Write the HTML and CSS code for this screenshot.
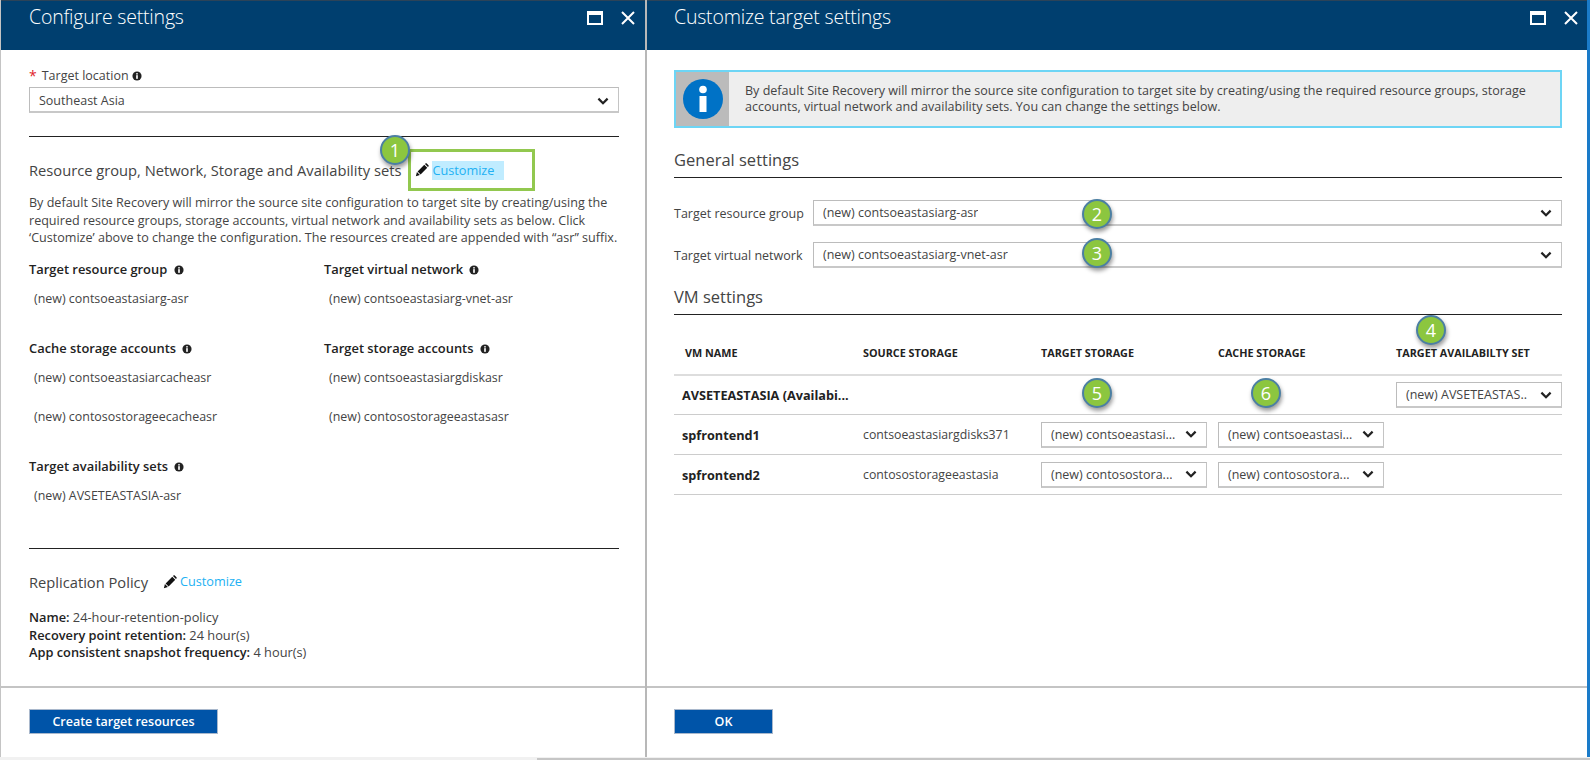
FILE: index.html
```html
<!DOCTYPE html>
<html lang="en">
<head>
<meta charset="utf-8">
<title>Configure settings</title>
<link rel="stylesheet" href="styles.css">
</head>
<body>
<svg class="defs" width="0" height="0" aria-hidden="true">
  <symbol id="i-info" viewBox="0 0 12 12"><circle cx="6" cy="6" r="5.5" fill="#222"/><rect x="5" y="5" width="2" height="4.4" fill="#fff"/><rect x="5" y="2.6" width="2" height="1.6" fill="#fff"/></symbol>
  <symbol id="i-pencil" viewBox="0 0 16 16"><path d="M1 15l1.2-4.6 3.4 3.4z M3 9.6l7.6-7.6 3.4 3.4-7.6 7.6z M11.4 1.2l.6-.6c.5-.4 1-.4 1.4 0l2 2c.4.4.4 1 0 1.4l-.6.6z" fill="#111"/></symbol>
  <symbol id="i-chev" viewBox="0 0 12 8"><path d="M1.4 1.6L6 6.2l4.6-4.6" fill="none" stroke="#222" stroke-width="2.2"/></symbol>
  <symbol id="i-max" viewBox="0 0 16 14"><path d="M0 0h16v14H0z M2 4v8h12V4z" fill="#fff" fill-rule="evenodd"/></symbol>
  <symbol id="i-close" viewBox="0 0 14 14"><path d="M1 1l12 12M13 1L1 13" stroke="#fff" stroke-width="2" fill="none"/></symbol>
</svg>
<div class="screen">
  <div class="panels">
    <section class="panel panel-left">
      <header class="head">
        <h1 class="title">Configure settings</h1>
        <div class="controls">
          <svg class="ic-max"><use href="#i-max"/></svg>
          <svg class="ic-close"><use href="#i-close"/></svg>
        </div>
      </header>
      <div class="body body-left">
        <div class="loc-label"><span class="req">*</span> Target location <svg class="ic-info"><use href="#i-info"/></svg></div>
        <div class="select select-wide"><span class="select-text">Southeast Asia</span><svg class="ic-chev"><use href="#i-chev"/></svg></div>
        <hr class="rule rule-first">
        <div class="sect-line">
          <span class="sect-title">Resource group, Network, Storage and Availability sets</span>
          <svg class="ic-pencil pencil-first"><use href="#i-pencil"/></svg>
          <a class="link link-hl">Customize</a>
        </div>
        <p class="desc">By default Site Recovery will mirror the source site configuration to target site by creating/using the required resource groups, storage accounts, virtual network and availability sets as below. Click ‘Customize’ above to change the configuration. The resources created are appended with “asr” suffix.</p>
        <div class="targets">
          <div class="group">
            <div class="group-head">Target resource group <svg class="ic-info"><use href="#i-info"/></svg></div>
            <div class="group-val">(new) contsoeastasiarg-asr</div>
          </div>
          <div class="group">
            <div class="group-head">Target virtual network <svg class="ic-info"><use href="#i-info"/></svg></div>
            <div class="group-val">(new) contsoeastasiarg-vnet-asr</div>
          </div>
          <div class="group">
            <div class="group-head">Cache storage accounts <svg class="ic-info"><use href="#i-info"/></svg></div>
            <div class="group-val">(new) contsoeastasiarcacheasr</div>
            <div class="group-val group-val-next">(new) contosostorageecacheasr</div>
          </div>
          <div class="group">
            <div class="group-head">Target storage accounts <svg class="ic-info"><use href="#i-info"/></svg></div>
            <div class="group-val">(new) contsoeastasiargdiskasr</div>
            <div class="group-val group-val-next">(new) contosostorageeastasasr</div>
          </div>
          <div class="group">
            <div class="group-head">Target availability sets <svg class="ic-info"><use href="#i-info"/></svg></div>
            <div class="group-val">(new) AVSETEASTASIA-asr</div>
          </div>
        </div>
        <hr class="rule rule-second">
        <div class="sect-line policy-line">
          <span class="sect-title">Replication Policy</span>
          <svg class="ic-pencil pencil-second"><use href="#i-pencil"/></svg>
          <a class="link">Customize</a>
        </div>
        <div class="policy">
          <div><b>Name:</b> 24-hour-retention-policy</div>
          <div><b>Recovery point retention:</b> 24 hour(s)</div>
          <div><b>App consistent snapshot frequency:</b> 4 hour(s)</div>
        </div>
      </div>
      <footer class="foot"><button class="btn btn-create">Create target resources</button></footer>
    </section>
    <section class="panel panel-right">
      <header class="head">
        <h1 class="title">Customize target settings</h1>
        <div class="controls">
          <svg class="ic-max"><use href="#i-max"/></svg>
          <svg class="ic-close"><use href="#i-close"/></svg>
        </div>
      </header>
      <div class="body body-right">
        <div class="notice">
          <div class="notice-icon">
            <svg class="ic-notice" viewBox="0 0 40 40"><circle cx="20" cy="20" r="20" fill="#0072c6"/><rect x="16.5" y="17" width="7" height="16" fill="#fff"/><circle cx="20" cy="10.5" r="3.8" fill="#fff"/></svg>
          </div>
          <p class="notice-text">By default Site Recovery will mirror the source site configuration to target site by creating/using the required resource groups, storage accounts, virtual network and availability sets. You can change the settings below.</p>
        </div>
        <h2 class="sub sub-general">General settings</h2>
        <div class="form-row form-row-first">
          <label class="form-label">Target resource group</label>
          <div class="select select-fill"><span class="select-text">(new) contsoeastasiarg-asr</span><svg class="ic-chev"><use href="#i-chev"/></svg></div>
        </div>
        <div class="form-row form-row-next">
          <label class="form-label">Target virtual network</label>
          <div class="select select-fill"><span class="select-text">(new) contsoeastasiarg-vnet-asr</span><svg class="ic-chev"><use href="#i-chev"/></svg></div>
        </div>
        <h2 class="sub sub-vm">VM settings</h2>
        <div class="vm-table">
          <div class="vm-row vm-head">
            <div class="th th-first">VM NAME</div>
            <div class="th">SOURCE STORAGE</div>
            <div class="th">TARGET STORAGE</div>
            <div class="th">CACHE STORAGE</div>
            <div class="th">TARGET AVAILABILTY SET</div>
          </div>
          <div class="vm-row vm-row-set">
            <div class="td-name">AVSETEASTASIA (Availabi...</div>
            <div></div><div></div><div></div>
            <div class="select select-cell"><span class="select-text">(new) AVSETEASTAS..</span><svg class="ic-chev"><use href="#i-chev"/></svg></div>
          </div>
          <div class="vm-row">
            <div class="td-name">spfrontend1</div>
            <div class="td">contsoeastasiargdisks371</div>
            <div class="select select-cell"><span class="select-text">(new) contsoeastasi...</span><svg class="ic-chev"><use href="#i-chev"/></svg></div>
            <div class="select select-cell"><span class="select-text">(new) contsoeastasi...</span><svg class="ic-chev"><use href="#i-chev"/></svg></div>
            <div></div>
          </div>
          <div class="vm-row">
            <div class="td-name">spfrontend2</div>
            <div class="td">contosostorageeastasia</div>
            <div class="select select-cell"><span class="select-text">(new) contosostora...</span><svg class="ic-chev"><use href="#i-chev"/></svg></div>
            <div class="select select-cell"><span class="select-text">(new) contosostora...</span><svg class="ic-chev"><use href="#i-chev"/></svg></div>
            <div></div>
          </div>
        </div>
      </div>
      <footer class="foot"><button class="btn btn-ok">OK</button></footer>
    </section>
    <div class="edge"></div>
  </div>
  <div class="strip"><div class="strip-line"></div></div>
  <div class="callout"></div>
  <div class="badge b1">1</div>
  <div class="badge b2">2</div>
  <div class="badge b3">3</div>
  <div class="badge b4">4</div>
  <div class="badge b5">5</div>
  <div class="badge b6">6</div>
</div>
</body>
</html>
```
FILE: styles.css
```css
* { box-sizing: border-box; }
html, body { margin: 0; padding: 0; background: #fff; }
body { font-family: "Open Sans", "Noto Sans", sans-serif; color: #444; overflow: hidden; }
.defs { position: absolute; }
.screen { position: relative; width: 1590px; height: 760px; display: flex; flex-direction: column; overflow: hidden; }
.panels { height: 757px; display: flex; }
.panel { display: flex; flex-direction: column; height: 100%; }
.panel-left { width: 647px; border-right: 2px solid #b8b8b8; border-left: 1px solid #c4c4c4; }
.panel-right { width: 940px; }
.edge { width: 3px; background: #1a7bc9; }
.strip { height: 3px; background: #f1f1f1; display: flex; justify-content: flex-end; align-items: flex-end; }
.strip-line { width: 1053px; height: 2px; background: #c6c6c6; }

.head { height: 50px; flex: none; background: #003f6f; border-top: 1px solid #2c4358; display: flex; justify-content: space-between; align-items: flex-start; }
.panel-left .head { padding-left: 28px; }
.panel-right .head { padding-left: 27px; }
.title { margin: 0; font-size: 19.5px; font-weight: 300; letter-spacing: -.2px; line-height: 32px; color: #fff; }
.controls { display: flex; align-items: center; height: 16px; margin-top: 9px; }
.panel-left .controls { margin-right: 10px; }
.panel-right .controls { margin-right: 9px; }
.ic-max { width: 16px; height: 14px; display: block; }
.ic-close { width: 14px; height: 14px; display: block; margin-left: 18px; }

.body { flex: 1; min-height: 0; }
.body-left { padding: 17px 26px 0 28px; }
.body-right { padding: 20px 25px 0 27px; }
.foot { height: 71px; flex: none; border-top: 2px solid #c4c4c4; padding-top: 21px; }
.panel-left .foot { padding-left: 28px; }
.panel-right .foot { padding-left: 27px; }
.btn { display: block; height: 25px; padding: 0; border: 1px solid #a9b8cc; background: #0054a8; color: #fff; font: 600 12.5px/22px "Open Sans", sans-serif; }
.btn-create { width: 189px; }
.btn-ok { width: 99px; }

.loc-label { font-size: 12.5px; line-height: 18px; display: flex; align-items: center; }
.req { color: #e0242a; font-size: 14px; margin-right: 5px; line-height: 18px; }
.ic-info { width: 10px; height: 10px; display: inline-block; margin-left: 3px; vertical-align: -1px; }
.select { display: flex; align-items: center; justify-content: space-between; height: 26px; background: #fff; border: 1px solid #bcbcbc; border-right-color: #c4c4c4; border-bottom: 2px solid #c8c8c8; color: #444; font-size: 12.5px; }
.select-text { white-space: nowrap; overflow: hidden; }
.select-wide { margin-top: 2px; padding: 2px 9px 0; }
.ic-chev { width: 12px; height: 8px; display: block; flex: none; }
.rule { margin: 0; height: 1px; border: 0; background: #222; }
.rule-first { margin-top: 23px; }
.sect-line { display: flex; align-items: center; height: 20px; margin-top: 23px; }
.sect-title { font-size: 14.7px; line-height: 20px; color: #444; }
.ic-pencil { width: 14px; height: 14px; display: block; flex: none; }
.pencil-first { margin-left: 14px; margin-right: 3px; }
.pencil-second { margin-left: 15px; margin-right: 3px; }
.link { color: #22b1f3; font-size: 12.7px; line-height: 19px; }
.link-hl { background: #c0ecff; width: 72px; }
.desc { margin: 14px 0 0; font-size: 12.57px; line-height: 17.6px; color: #444; width: 592px; }
.targets { display: grid; grid-template-columns: 295px 295px; row-gap: 31px; margin-top: 13px; }
.group-head { font-size: 12.9px; font-weight: 600; line-height: 18px; color: #222; }
.group-val { font-size: 12.45px; line-height: 18px; margin-top: 12px; padding-left: 5px; color: #444; }
.group-val-next { margin-top: 21px; }
.rule-second { margin-top: 43px; }
.policy-line { margin-top: 23px; }
.policy { margin-top: 17px; font-size: 12.8px; line-height: 17.8px; color: #444; }
.policy b { font-weight: 600; color: #222; }

.notice { display: flex; height: 58px; background: #eee; border: 2px solid #6dd5f5; }
.notice-icon { width: 53px; flex: none; background: #bbb; display: flex; align-items: center; justify-content: center; }
.ic-notice { width: 40px; height: 40px; display: block; }
.notice-text { margin: 0; align-self: center; padding-left: 16px; font-size: 12.55px; line-height: 16.5px; color: #444; width: 830px; }
.sub { margin: 0; font-size: 16.5px; font-weight: 400; line-height: 26px; color: #444; border-bottom: 1px solid #222; height: 31px; }
.sub-general { margin-top: 19px; }
.sub-vm { margin-top: 16px; }
.form-row { display: flex; align-items: center; }
.form-row-first { margin-top: 22px; }
.form-row-next { margin-top: 16px; }
.form-label { width: 139px; flex: none; font-size: 12.5px; color: #444; }
.select-fill { flex: 1; padding: 0 9px; }
.select-cell { width: 166px; padding: 0 9px; height: 26px; }
.vm-row { display: grid; grid-template-columns: 189px 178px 177px 178px 166px; align-items: center; height: 40px; border-bottom: 1px solid #ccc; }
.vm-head { height: 61px; border-bottom: 2px solid #ddd; padding-top: 16px; }
.vm-row-set { height: 39px; }
.th { font-size: 10.8px; font-weight: 700; color: #222; white-space: nowrap; }
.th-first { padding-left: 11px; }
.td-name { font-size: 12.7px; font-weight: 700; color: #222; padding-left: 8px; white-space: nowrap; }
.td { font-size: 12.3px; color: #444; white-space: nowrap; }

.callout { position: absolute; left: 408px; top: 149px; width: 127px; height: 42px; border: 3px solid #92c84f; }
.badge { position: absolute; width: 30px; height: 30px; border-radius: 50%; background: #8cc63f; border: 2px solid #4b7fa3; box-shadow: 1px 3px 4px rgba(0,0,0,.4); color: #fff; font-size: 18px; line-height: 26px; text-align: center; }
.b1 { left: 380px; top: 135px; }
.b2 { left: 1082px; top: 199px; }
.b3 { left: 1082px; top: 238px; }
.b4 { left: 1416px; top: 315px; }
.b5 { left: 1082px; top: 378px; }
.b6 { left: 1251px; top: 378px; }
```
